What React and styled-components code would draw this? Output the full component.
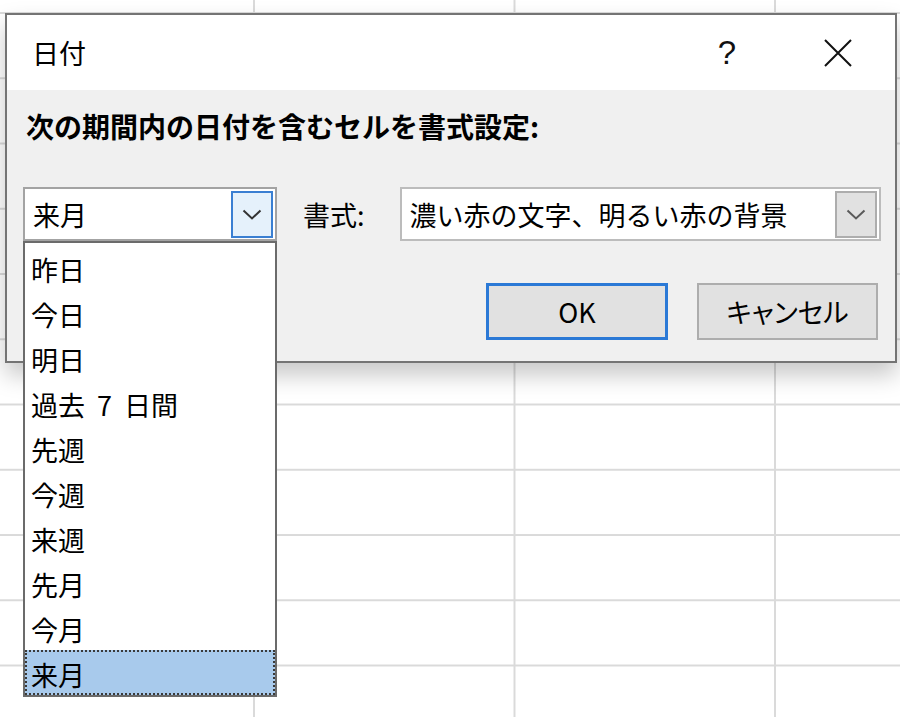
import React from 'react';
import styled, { createGlobalStyle } from 'styled-components';

const GlobalStyle = createGlobalStyle`
  html, body {
    margin: 0;
    padding: 0;
    background: #ffffff;
  }
  body {
    font-family: "Noto Sans CJK JP", "Noto Sans", sans-serif;
    color: #000000;
  }
`;

// spreadsheet behind the dialog
const Sheet = styled.div`
  position: relative;
  width: 900px;
  height: 717px;
  overflow: hidden;
  background-color: #ffffff;
  background-image:
    linear-gradient(to right, transparent calc(100% - 2px), #dadada calc(100% - 2px)),
    linear-gradient(to bottom, transparent calc(100% - 2px), #dadada calc(100% - 2px));
  background-size: 260.5px 65.25px;
  background-position: -5.5px -51.25px;
`;

const Dialog = styled.div`
  position: absolute;
  left: 5px;
  top: 13px;
  width: 892px;
  height: 350px;
  box-sizing: border-box;
  border: 2px solid #747474;
  display: flex;
  flex-direction: column;
  box-shadow: 0 12px 22px rgba(0, 0, 0, 0.22);
`;

const TitleBar = styled.div`
  height: 75px;
  flex: none;
  background: #ffffff;
  display: flex;
  align-items: center;
  padding-left: 25px;
`;

const Title = styled.div`
  flex: 1;
  font-size: 27px;
  line-height: 1;
`;

const TitleButton = styled.div`
  width: ${({ $width }) => $width || 60}px;
  display: flex;
  justify-content: center;
  align-items: center;
  margin-left: ${({ $gap }) => $gap || 0}px;
  font-family: "Liberation Sans", Arial, sans-serif;
  font-size: 33px;
  line-height: 1;
  color: #111111;
`;

const Body = styled.div`
  flex: 1;
  background: #f0f0f0;
  padding: 19px 14px 0 16px;
  display: flex;
  flex-direction: column;
`;

const Prompt = styled.div`
  font-size: 28px;
  font-weight: bold;
  line-height: 34px;
  margin-left: 3px;
`;

const FieldRow = styled.div`
  display: flex;
  align-items: center;
  margin-top: 44px;
`;

const Combo = styled.div`
  position: relative;
  height: 54px;
  box-sizing: border-box;
  border: 2px solid ${({ $active }) => ($active ? '#a3a3a3' : '#bcbcbc')};
  background: #ffffff;
  display: flex;
  align-items: center;
  ${({ $width }) => ($width ? `width: ${$width}px;` : 'flex: 1;')}
`;

const ComboText = styled.div`
  flex: 1;
  padding-left: 8px;
  font-size: 27px;
  line-height: 1;
  white-space: nowrap;
`;

const DropButton = styled.div`
  width: 42px;
  height: 47px;
  margin-right: 2px;
  box-sizing: border-box;
  border: 2px solid ${({ $active }) => ($active ? '#3a7fd2' : '#adadad')};
  background: ${({ $active }) => ($active ? '#e5f1fb' : '#e1e1e1')};
  display: flex;
  align-items: center;
  justify-content: center;
  color: ${({ $active }) => ($active ? '#333333' : '#5a5a5a')};
`;

const FieldLabel = styled.div`
  font-size: 27px;
  line-height: 1;
  margin: 0 35px 0 26px;
`;

const ButtonRow = styled.div`
  display: flex;
  justify-content: flex-end;
  gap: 29px;
  margin-top: 42px;
  padding-right: 3px;
`;

const DialogButton = styled.div`
  width: ${({ $width }) => $width}px;
  height: 57px;
  box-sizing: border-box;
  border: ${({ $default }) => ($default ? '3px solid #2b79d6' : '2px solid #adadad')};
  background: #e1e1e1;
  display: flex;
  align-items: center;
  justify-content: center;
  font-size: 27px;
  line-height: 1;
  font-feature-settings: "palt";
`;

const DropList = styled.div`
  position: absolute;
  top: calc(100% + 2px);
  left: -2px;
  width: 254px;
  box-sizing: border-box;
  border: 2px solid #6b6b6b;
  padding-top: 2px;
  background: #ffffff;
  z-index: 10;
`;

const ListItem = styled.div`
  height: 45px;
  box-sizing: border-box;
  display: flex;
  align-items: center;
  padding: 4px 0 0 6px;
  font-size: 27px;
  line-height: 1;
  white-space: pre;
  word-spacing: 6px;
  background: ${({ $selected }) => ($selected ? '#a8caec' : 'transparent')};
  outline: ${({ $selected }) => ($selected ? '2px dotted #3a3a3a' : 'none')};
  outline-offset: -2px;
`;

const Chevron = () => (
  <svg width="20" height="11" viewBox="0 0 20 11" fill="none">
    <path d="M1.5 1.5 L10 9.5 L18.5 1.5" stroke="currentColor" strokeWidth="2" />
  </svg>
);

const CloseIcon = () => (
  <svg width="28" height="28" viewBox="0 0 28 28" fill="none">
    <path d="M1 1 L27 27 M27 1 L1 27" stroke="#111111" strokeWidth="2" />
  </svg>
);

const periods = [
  '昨日',
  '今日',
  '明日',
  '過去 7 日間',
  '先週',
  '今週',
  '来週',
  '先月',
  '今月',
  '来月',
];

const App = () => {
  const selected = '来月';
  return (
    <>
      <GlobalStyle />
      <Sheet>
        <Dialog>
          <TitleBar>
            <Title>日付</Title>
            <TitleButton>?</TitleButton>
            <TitleButton $gap={51}>
              <CloseIcon />
            </TitleButton>
            <TitleButton $width={27} />
          </TitleBar>
          <Body>
            <Prompt>次の期間内の日付を含むセルを書式設定:</Prompt>
            <FieldRow>
              <Combo $active $width={254}>
                <ComboText>{selected}</ComboText>
                <DropButton $active>
                  <Chevron />
                </DropButton>
                <DropList>
                  {periods.map((p) => (
                    <ListItem key={p} $selected={p === selected}>
                      {p}
                    </ListItem>
                  ))}
                </DropList>
              </Combo>
              <FieldLabel>書式:</FieldLabel>
              <Combo>
                <ComboText>濃い赤の文字、明るい赤の背景</ComboText>
                <DropButton>
                  <Chevron />
                </DropButton>
              </Combo>
            </FieldRow>
            <ButtonRow>
              <DialogButton $default $width={182}>OK</DialogButton>
              <DialogButton $width={181}>キャンセル</DialogButton>
            </ButtonRow>
          </Body>
        </Dialog>
      </Sheet>
    </>
  );
};

export default App;
